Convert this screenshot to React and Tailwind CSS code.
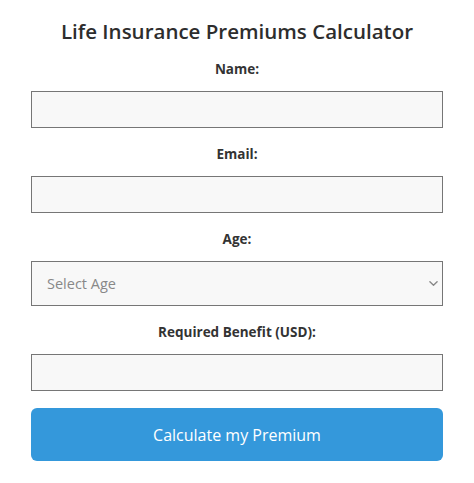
import { useState } from 'react';

function Field({ label, children }) {
  return (
    <div className="mt-4 first:mt-0">
      <label className="block text-center text-[13.5px] leading-[20px] font-bold text-[#333]">{label}</label>
      <div className="mt-3">{children}</div>
    </div>
  );
}

export default function App() {
  const [age, setAge] = useState('');
  const inputCls = 'block w-full h-[37px] border border-[#767676] bg-[#f8f8f8] px-3 text-[15px] text-[#333] outline-none';

  return (
    <div className="min-h-screen bg-white font-['Open_Sans',sans-serif]">
      <div className="w-[412px] ml-[31px] pt-[17px]">
        <h1 className="text-center text-[20.5px] leading-[28px] font-semibold text-[#2d2d2d]">
          Life Insurance Premiums Calculator
        </h1>

        <div className="mt-[14px]">
          <Field label="Name:">
            <input type="text" className={inputCls} />
          </Field>
          <Field label="Email:">
            <input type="email" className={inputCls} />
          </Field>
          <Field label="Age:">
            <div className="relative">
              <select
                value={age}
                onChange={(e) => setAge(e.target.value)}
                className="block w-full h-[45px] appearance-none border border-[#767676] bg-[#f8f8f8] pl-[15px] pr-8 text-[14.5px] text-[#888] outline-none"
              >
                <option value="">Select Age</option>
                <option value="18-30">18-30</option>
                <option value="31-45">31-45</option>
                <option value="46-60">46-60</option>
              </select>
              <svg className="pointer-events-none absolute right-[5px] top-[19px] w-[9px] h-[7px]" viewBox="0 0 10 6" fill="none">
                <path d="M1 1l4 4 4-4" stroke="#888" strokeWidth="1.5" strokeLinecap="round" strokeLinejoin="round" />
              </svg>
            </div>
          </Field>
          <Field label="Required Benefit (USD):">
            <input type="number" className={inputCls} />
          </Field>
        </div>

        <button className="mt-[17px] block w-full h-[53px] rounded-[6px] bg-[#3498db] text-white text-[16px]">
          Calculate my Premium
        </button>
      </div>
    </div>
  );
}
